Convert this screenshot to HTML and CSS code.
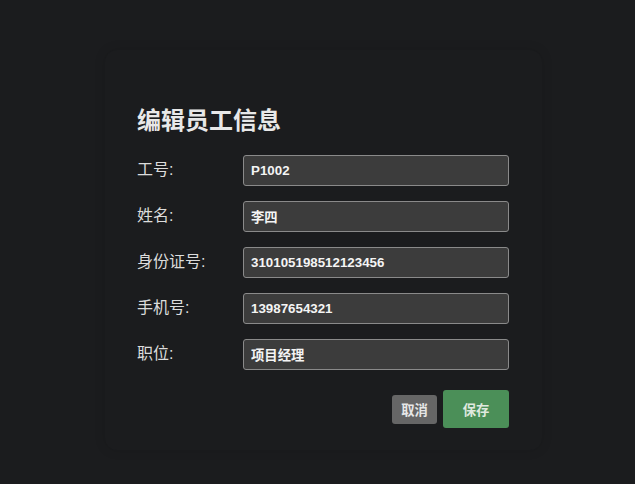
FILE: index.html
```html
<!DOCTYPE html>
<html lang="zh">
<head>
<meta charset="utf-8">
<title>编辑员工信息</title>
<link rel="stylesheet" href="styles.css">
</head>
<body>
<div class="dialog">
  <h2 class="title">编辑员工信息</h2>
  <form class="form">
    <div class="row"><label class="label">工号:</label><input class="field" value="P1002"></div>
    <div class="row"><label class="label">姓名:</label><input class="field" value="李四"></div>
    <div class="row"><label class="label">身份证号:</label><input class="field" value="310105198512123456"></div>
    <div class="row"><label class="label">手机号:</label><input class="field" value="13987654321"></div>
    <div class="row"><label class="label">职位:</label><input class="field" value="项目经理"></div>
    <div class="actions">
      <button type="button" class="btn btn-cancel">取消</button>
      <button type="button" class="btn btn-save">保存</button>
    </div>
  </form>
</div>
</body>
</html>
```
FILE: styles.css
```css
html, body {
  margin: 0;
  padding: 0;
  background: #1b1c1e;
  height: 100%;
}
body {
  font-family: "Liberation Sans", "Noto Sans CJK SC", sans-serif;
  color: #e0e0e0;
  padding: 50px 0 0 105px;
  box-sizing: border-box;
}
.dialog {
  width: 437px;
  height: 400px;
  box-sizing: border-box;
  padding: 56px 33px 0 32px;
  background: #1b1c1e;
  border-radius: 12px;
  box-shadow: 0 0 12px rgba(0,0,0,0.12);
}
.title {
  margin: 0 0 19px;
  font-size: 24px;
  line-height: 30px;
  font-weight: bold;
  color: #e8e8e8;
}
.form {
  display: flex;
  flex-direction: column;
  gap: 15px;
  margin: 0;
}
.row {
  display: flex;
  align-items: center;
  height: 31px;
}
.label {
  width: 106px;
  flex: none;
  font-size: 16px;
  line-height: 20px;
  padding-bottom: 2px;
  color: #dcdcdc;
}
.field {
  flex: 1;
  height: 31px;
  box-sizing: border-box;
  border: 1px solid #8a8a8a;
  border-radius: 3px;
  background: #3c3c3c;
  color: #f4f4f4;
  font-family: "Liberation Sans", "Noto Sans CJK SC", sans-serif;
  font-size: 13.333px;
  font-weight: 600;
  padding: 0 7px;
  outline: none;
}
.actions {
  display: flex;
  justify-content: flex-end;
  align-items: center;
  gap: 6px;
  margin-top: 5px;
}
.btn {
  border: none;
  border-radius: 3px;
  font-family: "Liberation Sans", "Noto Sans CJK SC", sans-serif;
  font-size: 13.333px;
  font-weight: bold;
  color: #e6e6e6;
  cursor: pointer;
}
.btn-cancel {
  width: 45px;
  height: 29px;
  background: #666666;
  padding: 0;
}
.btn-save {
  width: 66px;
  height: 38px;
  background: #4b8f58;
  padding: 0;
  color: #dfe9df;
}
```
